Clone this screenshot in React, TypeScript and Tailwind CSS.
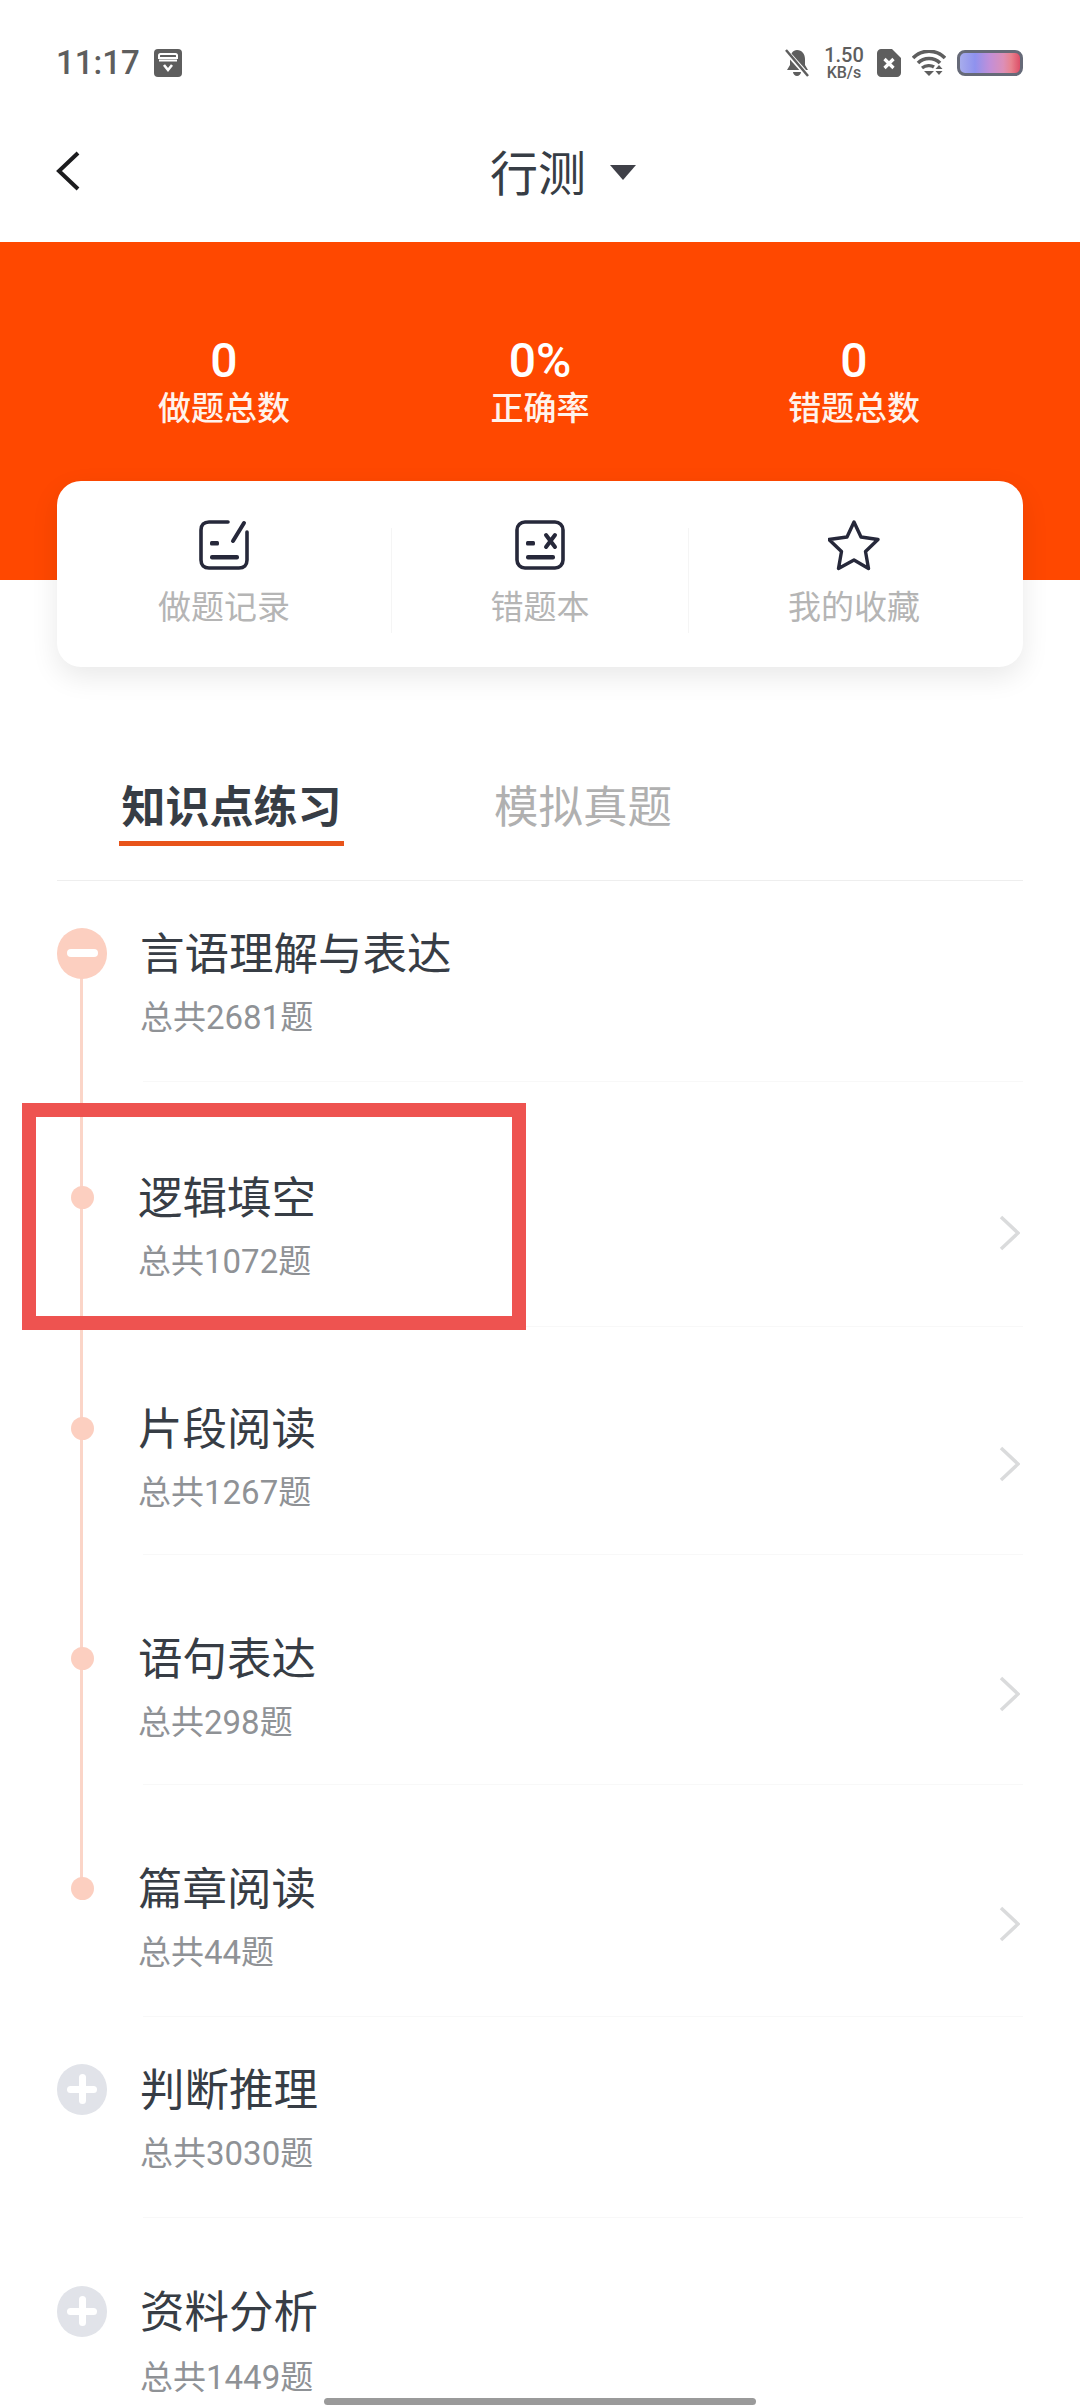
import React from "react";

const title = "text-[44.5px] leading-[60px] text-[#373d45]";
const sub = "text-[33px] leading-[44px] text-[#8f9296]";

function Minus() {
  return (
    <div className="w-[51px] h-[51px] rounded-full bg-[#fccfc0] flex items-center justify-center">
      <div className="w-[31px] h-[8px] rounded-full bg-white" />
    </div>
  );
}
function Plus() {
  return (
    <div className="relative w-[51px] h-[51px] rounded-full bg-[#e1e3e9] flex items-center justify-center">
      <div className="w-[30px] h-[7px] rounded-full bg-white" />
      <div className="absolute w-[7px] h-[30px] rounded-full bg-white" />
    </div>
  );
}
function Dot() {
  return <div className="w-[23px] h-[23px] rounded-full bg-[#fccfc0]" />;
}
function Chevron() {
  return (
    <svg width="21" height="36" viewBox="0 0 21 36" className="mt-[48px] mr-[3px] shrink-0">
      <polyline points="2,2 19,18 2,34" fill="none" stroke="#dadbdc" strokeWidth="3.5" />
    </svg>
  );
}

function Row(props: {
  h: string;
  pt: string;
  name: string;
  count: string;
  marker: React.ReactNode;
  child?: boolean;
  noLine?: boolean;
  subGap: string;
}) {
  return (
    <div className={`flex mx-[57px] ${props.h}`}>
      <div className={`w-[50px] shrink-0 ${props.pt}`}>
        <div className="relative z-10 h-[60px] flex items-center justify-center">{props.marker}</div>
      </div>
      <div className={`ml-[36px] flex-1 flex justify-between ${props.pt} ${props.noLine ? "" : "border-b border-[#f8f8f8]"}`}>
        <div className={props.child ? "-ml-[5px] pt-[2px]" : "-ml-[3px] pt-[2px]"}>
          <div className={title}>{props.name}</div>
          <div className={`${sub} ${props.subGap}`}>{props.count}</div>
        </div>
        {props.child ? <Chevron /> : null}
      </div>
    </div>
  );
}

function Stat({ value, label, w }: { value: string; label: string; w: string }) {
  return (
    <div className={`${w} flex flex-col items-center`}>
      <div className="text-[48px] leading-[52px] font-medium text-white">{value}</div>
      <div className="text-[33px] leading-[44px] font-medium text-[#fff3ec]">{label}</div>
    </div>
  );
}

export default function App() {
  return (
    <div className="relative w-[1080px] h-[2408px] overflow-hidden bg-white [font-family:Roboto,'Noto_Sans_CJK_SC',sans-serif]">
      {/* status bar */}
      <div className="h-[126px] pl-[56px] pr-[57px] flex items-center justify-between">
        <div className="flex items-center gap-[14px]">
          <span className="text-[33px] font-medium text-[#5e5e5e]">11:17</span>
          <svg width="28" height="28" viewBox="0 0 28 28">
            <rect width="28" height="28" rx="4" fill="#5e5e5e" />
            <path d="M5 9V6.5C5 5.7 5.7 5 6.5 5h15c.8 0 1.5.7 1.5 1.5V9z" fill="none" stroke="#fff" strokeWidth="2" />
            <rect x="5" y="10.5" width="18" height="2" fill="#fff" />
            <path d="M10 16l4 5 4-5" fill="none" stroke="#fff" strokeWidth="2.6" />
          </svg>
        </div>
        <div className="flex items-center">
          <svg width="26" height="28" viewBox="0 0 26 28">
            <path d="M13 1c5 0 8 4 8 9v6l3 5H3l3-5v-6c0-5 3-9 7-9zM9 23h8c0 2-2 4-4 4s-4-2-4-4z" fill="#5e5e5e" />
            <line x1="1" y1="1" x2="24" y2="27" stroke="#fff" strokeWidth="5" />
            <line x1="2" y1="1" x2="24" y2="27" stroke="#5e5e5e" strokeWidth="2.5" />
          </svg>
          <div className="ml-[12px] w-[44px] flex flex-col items-center font-medium text-[#5e5e5e]">
            <span className="text-[20px] leading-[20px]">1.50</span>
            <span className="text-[16px] leading-[16px]">KB/s</span>
          </div>
          <svg width="24" height="28" viewBox="0 0 24 28" className="ml-[11px]">
            <path d="M4 0h11l9 9v15c0 2-2 4-4 4H4c-2 0-4-2-4-4V4c0-2 2-4 4-4z" fill="#5e5e5e" />
            <path d="M7.5 10l9 9M16.5 10l-9 9" stroke="#fff" strokeWidth="3.2" />
          </svg>
          <svg width="34" height="26" viewBox="0 0 34 26" className="ml-[11px]">
            <path d="M1 8c9-9 23-9 32 0" fill="none" stroke="#5e5e5e" strokeWidth="3.6" />
            <path d="M6 13c6-6 16-6 22 0" fill="none" stroke="#5e5e5e" strokeWidth="3.6" />
            <path d="M10 18c4-3 9-3 12-1" fill="none" stroke="#5e5e5e" strokeWidth="3.4" />
            <path d="M12 21h10l-5 5z" fill="#5e5e5e" />
            <path d="M27 15l3.5 4h-7zM23.500 21h7l-3.500 4z" fill="#5e5e5e" />
          </svg>
          <div className="ml-[11px] w-[66px] h-[26px] rounded-[8px] border-[3px] border-[#666a78] bg-[linear-gradient(90deg,#a7acec,#8f92ee_25%,#c28fd8_50%,#dc8fb8_72%,#e8838f_85%,#dd4f68)]" />
        </div>
      </div>

      {/* nav */}
      <div className="relative h-[116px] pb-[24px] flex items-center justify-center">
        <svg width="26" height="40" viewBox="0 0 26 40" className="absolute left-[55px] top-[25px]">
          <polyline points="23,2 4,20 23,38" fill="none" stroke="#1c1c1e" strokeWidth="4" />
        </svg>
        <span className="text-[48px] leading-[60px] text-[#373d45] ml-[46px] mt-[5px]">行测</span>
        <svg width="26" height="15" viewBox="0 0 26 15" className="ml-[24px]">
          <path d="M0 0h26L13 15z" fill="#3f4048" />
        </svg>
      </div>

      {/* orange header */}
      <div className="h-[338px] bg-[#ff4800] pt-[93px] px-[57px] flex items-start">
        <Stat w="w-[334px]" value="0" label="做题总数" />
        <Stat w="w-[298px]" value="0%" label="正确率" />
        <Stat w="w-[330px]" value="0" label="错题总数" />
      </div>

      {/* shortcut card */}
      <div className="relative mt-[-99px] mx-[57px] h-[186px] pt-[47px] rounded-[24px] bg-white shadow-[0_10px_28px_rgba(0,0,0,0.09)] flex items-start">
        <div className="w-[334px] h-[105px] flex flex-col items-center">
          <svg width="52" height="52" viewBox="0 0 52 52" className="mt-[-9px]">
            <path d="M30 3H11C6 3 3 6 3 11v30c0 5 3 8 8 8h30c5 0 8-3 8-8V13" fill="none" stroke="#26283a" strokeWidth="3.6" strokeLinecap="round" />
            <path d="M35 22 46 4" fill="none" stroke="#26283a" strokeWidth="4" strokeLinecap="round" />
            <rect x="12" y="22" width="9" height="4.500" rx="1.500" fill="#26283a" />
            <rect x="12" y="36" width="29" height="4.500" rx="2" fill="#26283a" />
          </svg>
          <div className="mt-[15px] text-[33px] leading-[44px] text-[#b5b5b5]">做题记录</div>
        </div>
        <div className="w-[298px] h-[105px] border-x border-[#f5f5f5] flex flex-col items-center">
          <svg width="52" height="52" viewBox="0 0 52 52" className="mt-[-9px]">
            <rect x="3" y="3" width="46" height="46" rx="8" fill="none" stroke="#26283a" strokeWidth="3.6" />
            <rect x="12" y="22" width="9" height="4.500" rx="1.500" fill="#26283a" />
            <path d="M32 16l9 12M41 16l-9 12" stroke="#26283a" strokeWidth="4" strokeLinecap="round" />
            <rect x="12" y="36" width="29" height="4.500" rx="2" fill="#26283a" />
          </svg>
          <div className="mt-[15px] text-[33px] leading-[44px] text-[#b5b5b5]">错题本</div>
        </div>
        <div className="w-[330px] h-[105px] flex flex-col items-center">
          <svg width="52" height="52" viewBox="0 0 52 52" className="mt-[-9px]">
            <path d="M26 3l7 15 17 2.500-12.500 12 3 17L26 41l-15.500 8.500 3-17L1 20.500 19 18z" fill="none" stroke="#26283a" strokeWidth="3.4" strokeLinejoin="round" />
          </svg>
          <div className="mt-[15px] text-[33px] leading-[44px] text-[#b5b5b5]">我的收藏</div>
        </div>
      </div>

      {/* tabs */}
      <div className="mx-[57px] h-[214px] pl-[62px] flex items-end gap-[150px] border-b border-[#eeeeee]">
        <div className="w-[225px] mb-[34px] text-center">
          <div className="text-[44px] leading-[60px] font-bold text-[#373d45]">知识点练习</div>
          <div className="mt-[3px] h-[5px] bg-[#e8541a]" />
        </div>
        <div className="mb-[34px]">
          <div className="text-[44.5px] leading-[60px] text-[#b0b0b0]">模拟真题</div>
          <div className="mt-[3px] h-[5px]" />
        </div>
      </div>

      {/* list */}
      <div className="relative">
        <div className="absolute left-[80px] top-[96px] w-[3px] h-[912px] bg-[#fbd5c8]" />
        <Row h="h-[201px]" pt="pt-[42px]" subGap="mt-[11px]" name="言语理解与表达" count="总共2681题" marker={<Minus />} />
        <Row h="h-[245px]" pt="pt-[85px]" subGap="mt-[11px]" name="逻辑填空" count="总共1072题" marker={<Dot />} child />
        <Row h="h-[228px]" pt="pt-[71px]" subGap="mt-[11px]" name="片段阅读" count="总共1267题" marker={<Dot />} child />
        <Row h="h-[230px]" pt="pt-[73px]" subGap="mt-[11px]" name="语句表达" count="总共298题" marker={<Dot />} child />
        <Row h="h-[232px]" pt="pt-[73px]" subGap="mt-[11px]" name="篇章阅读" count="总共44题" marker={<Dot />} child />
        <Row h="h-[201px]" pt="pt-[42px]" subGap="mt-[11px]" name="判断推理" count="总共3030题" marker={<Plus />} />
        <Row h="h-[189px]" pt="pt-[63px]" subGap="mt-[13px]" name="资料分析" count="总共1449题" marker={<Plus />} noLine />
      </div>

      {/* annotation rectangle */}
      <div className="absolute left-[22px] top-[1103px] w-[504px] h-[227px] border-[14px] border-[#ee5350]" />

      {/* home indicator */}
      <div className="absolute left-[324px] top-[2398px] w-[432px] h-[7px] rounded-full bg-[#9a9a9a]" />
    </div>
  );
}
